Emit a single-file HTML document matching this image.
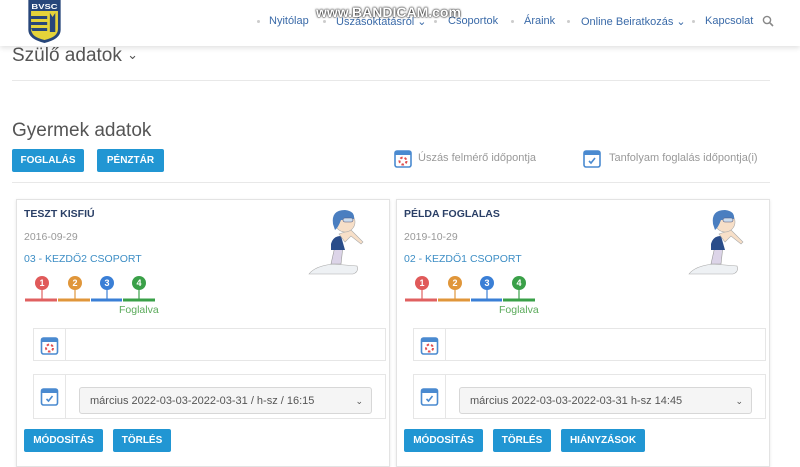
<!DOCTYPE html>
<html><head><meta charset="utf-8"><style>
*{box-sizing:border-box;margin:0;padding:0}
body{width:800px;height:467px;overflow:hidden;background:#fff;font-family:"Liberation Sans",sans-serif;position:relative}
.abs{position:absolute}
.hdr{left:0;top:0;width:800px;height:46px;background:#fff;box-shadow:0 2px 5px rgba(0,0,0,.12);z-index:2}
.nav{top:15px;font-size:11px;color:#3a6aa8;white-space:nowrap}
.dot{top:20px;width:3px;height:3px;background:#ccc;border-radius:50%}
.btn{background:#2196d3;color:#fff;font-weight:bold;font-size:10px;text-align:center;line-height:23px;border-radius:2px;height:23px}
.card{background:#fff;border:1px solid #e3e3e3;box-shadow:0 1px 3px rgba(0,0,0,.1);width:374px;height:268px;top:199px}
.name{left:7px;top:8px;font-size:10.5px;font-weight:bold;color:#2a3f66}
.date{left:7px;top:31px;font-size:10.5px;color:#999}
.grp{left:7px;top:53px;font-size:10.5px;color:#3d8ec5}
.row{border:1px solid #e6e6e6;left:16px;width:353px}
.sep{border-left:1px solid #e6e6e6;position:absolute;left:31px;top:0;bottom:0}
.sel{border:1px solid #d7d7d7;border-radius:3px;background:#f5f5f5;font-size:11px;color:#555;line-height:26px;padding-left:10px;height:27px}
</style></head><body>
<div class="abs hdr">
<svg class="abs" style="left:27px;top:0" width="35" height="43" viewBox="0 0 26 43" preserveAspectRatio="none"><path d="M1 0H25V30Q25 39 13 43Q1 39 1 30Z" fill="#27467a"/><path d="M3 11H23V29Q23 37 13 40Q3 37 3 29Z" fill="#e4d33a"/><path d="M3 16H15V19H3ZM3 22H15V25H3ZM3 28H15V31H4Z" fill="#27467a"/><path d="M17 13L19 17L21 13V32H17Z" fill="#27467a"/><text x="13" y="9" font-size="7" font-weight="bold" fill="#fff" text-anchor="middle" font-family="Liberation Sans">BVSC</text></svg>
<div class="abs dot" style="left:257px"></div><div class="abs nav" style="left:269px">Nyitólap</div>
<div class="abs dot" style="left:323px"></div><div class="abs nav" style="left:336px">Úszásoktatásról ⌄</div>
<div class="abs dot" style="left:434px"></div><div class="abs nav" style="left:448px">Csoportok</div>
<div class="abs dot" style="left:511px"></div><div class="abs nav" style="left:524px">Áraink</div>
<div class="abs dot" style="left:567px"></div><div class="abs nav" style="left:581px">Online Beiratkozás ⌄</div>
<div class="abs dot" style="left:692px"></div><div class="abs nav" style="left:705px">Kapcsolat</div>
<svg class="abs" style="left:762px;top:15px" width="12" height="12" viewBox="0 0 12 12"><circle cx="5" cy="5" r="3.6" fill="none" stroke="#888" stroke-width="1.4"/><path d="M7.6 7.6L11 11" stroke="#888" stroke-width="1.6"/></svg>
<div class="abs" style="left:316px;top:4px;font-size:14px;font-weight:bold;color:#fff;text-shadow:0 0 2px #000,0 0 1px #000;letter-spacing:0">www.BANDICAM.com</div>
</div>
<div class="abs" style="left:12px;top:45px;font-size:19px;color:#555">Szülő adatok <span style="font-size:13px;position:relative;top:-2px">⌄</span></div>
<div class="abs" style="left:12px;top:80px;width:758px;border-top:1px solid #e8e8e8"></div>
<div class="abs" style="left:12px;top:120px;font-size:19px;color:#555">Gyermek adatok</div>
<div class="abs btn" style="left:12px;top:149px;width:72px">FOGLALÁS</div>
<div class="abs btn" style="left:97px;top:149px;width:67px">PÉNZTÁR</div>
<svg class="abs" style="left:394px;top:148px" width="18" height="20" viewBox="0 0 18 20"><rect x="1" y="3" width="16" height="16" rx="2" fill="#fff" stroke="#4a8ad0" stroke-width="1.6"/><rect x="1" y="3" width="16" height="4" fill="#4a8ad0"/><circle cx="9" cy="13" r="3.5" fill="none" stroke="#e05050" stroke-width="2" stroke-dasharray="2.5 2"/></svg>
<div class="abs" style="left:418px;top:152px;font-size:11px;color:#999">Úszás felmérő időpontja</div>
<svg class="abs" style="left:583px;top:148px" width="18" height="20" viewBox="0 0 18 20"><rect x="1" y="3" width="16" height="16" rx="2" fill="#fff" stroke="#4a8ad0" stroke-width="1.6"/><rect x="1" y="3" width="16" height="4" fill="#4a8ad0"/><path d="M6 13L8 15L12 10" stroke="#4a8ad0" stroke-width="1.6" fill="none"/></svg>
<div class="abs" style="left:609px;top:152px;font-size:11px;color:#999">Tanfolyam foglalás időpontja(i)</div>
<div class="abs" style="left:12px;top:182px;width:758px;border-top:1px solid #e8e8e8"></div>

<div class="abs card" style="left:16px">
<div class="abs name">TESZT KISFIÚ</div><div class="abs date">2016-09-29</div><div class="abs grp">03 - KEZDŐ2 CSOPORT</div>
<svg class="abs" style="left:290px;top:6px" width="62" height="70" viewBox="0 0 62 70"><path d="M2 68Q8 60 26 58L50 60Q52 66 46 68Z" fill="#eef1f4" stroke="#aaa" stroke-width=".6"/><path d="M24 58L28 40L36 40L34 58Z" fill="#dcd4e8" stroke="#999" stroke-width=".6"/><path d="M24 38Q26 30 34 30L38 44L24 44Z" fill="#2a4d8a"/><path d="M32 28L44 24L56 36L54 38L44 30L38 36Z" fill="#f7dfc8" stroke="#aaa" stroke-width=".6"/><circle cx="38" cy="16" r="10" fill="#f7dfc8" stroke="#aaa" stroke-width=".6"/><path d="M26 18Q24 4 38 4Q48 5 47 13L34 14Q31 22 28 24Z" fill="#4a7ec0"/><rect x="36" y="12" width="10" height="4" rx="2" fill="#cde" stroke="#557" stroke-width=".6"/></svg>
<svg class="abs" style="left:8px;top:74px" width="130" height="28" viewBox="0 0 130 28"><g stroke-width="3"><path d="M0 26H32" stroke="#e06060"/><path d="M33 26H65" stroke="#e0963a"/><path d="M66 26H97" stroke="#3a7fd6"/><path d="M98 26H130" stroke="#3aa048"/></g><g stroke-width="1.2"><path d="M17 8V26" stroke="#e06060"/><path d="M50 8V26" stroke="#e0963a"/><path d="M82 8V26" stroke="#3a7fd6"/><path d="M114 8V26" stroke="#3aa048"/></g><circle cx="17" cy="9" r="7" fill="#e05a5a"/><circle cx="50" cy="9" r="7" fill="#e0963a"/><circle cx="82" cy="9" r="7" fill="#3a7fd6"/><circle cx="114" cy="9" r="7" fill="#3aa048"/><g font-size="9" font-weight="bold" fill="#fff" text-anchor="middle" font-family="Liberation Sans"><text x="17" y="12">1</text><text x="50" y="12">2</text><text x="82" y="12">3</text><text x="114" y="12">4</text></g></svg>
<div class="abs" style="left:102px;top:104px;font-size:10.5px;color:#5aaa5a">Foglalva</div>
<div class="abs row" style="top:128px;height:33px"><div class="sep"></div>
<svg class="abs" style="left:6px;top:6px" width="19" height="20" viewBox="0 0 18 20"><rect x="1" y="3" width="16" height="16" rx="2" fill="#fff" stroke="#4a8ad0" stroke-width="1.6"/><rect x="1" y="3" width="16" height="4" fill="#4a8ad0"/><circle cx="9" cy="13" r="3.5" fill="none" stroke="#e05050" stroke-width="2" stroke-dasharray="2.5 2"/></svg></div>
<div class="abs row" style="top:174px;height:45px"><div class="sep"></div>
<svg class="abs" style="left:6px;top:11px" width="19" height="20" viewBox="0 0 18 20"><rect x="1" y="3" width="16" height="16" rx="2" fill="#fff" stroke="#4a8ad0" stroke-width="1.6"/><rect x="1" y="3" width="16" height="4" fill="#4a8ad0"/><path d="M6 13L8 15L12 10" stroke="#4a8ad0" stroke-width="1.6" fill="none"/></svg>
<div class="abs sel" style="left:45px;top:12px;width:293px">március 2022-03-03-2022-03-31 / h-sz / 16:15<span style="position:absolute;right:8px;font-size:9px">⌄</span></div></div>
<div class="abs btn" style="left:7px;top:229px;width:79px">MÓDOSÍTÁS</div>
<div class="abs btn" style="left:96px;top:229px;width:58px">TÖRLÉS</div>
</div>

<div class="abs card" style="left:396px">
<div class="abs name">PÉLDA FOGLALAS</div><div class="abs date">2019-10-29</div><div class="abs grp">02 - KEZDŐ1 CSOPORT</div>
<svg class="abs" style="left:290px;top:6px" width="62" height="70" viewBox="0 0 62 70"><path d="M2 68Q8 60 26 58L50 60Q52 66 46 68Z" fill="#eef1f4" stroke="#aaa" stroke-width=".6"/><path d="M24 58L28 40L36 40L34 58Z" fill="#dcd4e8" stroke="#999" stroke-width=".6"/><path d="M24 38Q26 30 34 30L38 44L24 44Z" fill="#2a4d8a"/><path d="M32 28L44 24L56 36L54 38L44 30L38 36Z" fill="#f7dfc8" stroke="#aaa" stroke-width=".6"/><circle cx="38" cy="16" r="10" fill="#f7dfc8" stroke="#aaa" stroke-width=".6"/><path d="M26 18Q24 4 38 4Q48 5 47 13L34 14Q31 22 28 24Z" fill="#4a7ec0"/><rect x="36" y="12" width="10" height="4" rx="2" fill="#cde" stroke="#557" stroke-width=".6"/></svg>
<svg class="abs" style="left:8px;top:74px" width="130" height="28" viewBox="0 0 130 28"><g stroke-width="3"><path d="M0 26H32" stroke="#e06060"/><path d="M33 26H65" stroke="#e0963a"/><path d="M66 26H97" stroke="#3a7fd6"/><path d="M98 26H130" stroke="#3aa048"/></g><g stroke-width="1.2"><path d="M17 8V26" stroke="#e06060"/><path d="M50 8V26" stroke="#e0963a"/><path d="M82 8V26" stroke="#3a7fd6"/><path d="M114 8V26" stroke="#3aa048"/></g><circle cx="17" cy="9" r="7" fill="#e05a5a"/><circle cx="50" cy="9" r="7" fill="#e0963a"/><circle cx="82" cy="9" r="7" fill="#3a7fd6"/><circle cx="114" cy="9" r="7" fill="#3aa048"/><g font-size="9" font-weight="bold" fill="#fff" text-anchor="middle" font-family="Liberation Sans"><text x="17" y="12">1</text><text x="50" y="12">2</text><text x="82" y="12">3</text><text x="114" y="12">4</text></g></svg>
<div class="abs" style="left:102px;top:104px;font-size:10.5px;color:#5aaa5a">Foglalva</div>
<div class="abs row" style="top:128px;height:33px"><div class="sep"></div>
<svg class="abs" style="left:6px;top:6px" width="19" height="20" viewBox="0 0 18 20"><rect x="1" y="3" width="16" height="16" rx="2" fill="#fff" stroke="#4a8ad0" stroke-width="1.6"/><rect x="1" y="3" width="16" height="4" fill="#4a8ad0"/><circle cx="9" cy="13" r="3.5" fill="none" stroke="#e05050" stroke-width="2" stroke-dasharray="2.5 2"/></svg></div>
<div class="abs row" style="top:174px;height:45px"><div class="sep"></div>
<svg class="abs" style="left:6px;top:11px" width="19" height="20" viewBox="0 0 18 20"><rect x="1" y="3" width="16" height="16" rx="2" fill="#fff" stroke="#4a8ad0" stroke-width="1.6"/><rect x="1" y="3" width="16" height="4" fill="#4a8ad0"/><path d="M6 13L8 15L12 10" stroke="#4a8ad0" stroke-width="1.6" fill="none"/></svg>
<div class="abs sel" style="left:45px;top:12px;width:293px">március 2022-03-03-2022-03-31 h-sz 14:45<span style="position:absolute;right:8px;font-size:9px">⌄</span></div></div>
<div class="abs btn" style="left:7px;top:229px;width:79px">MÓDOSÍTÁS</div>
<div class="abs btn" style="left:96px;top:229px;width:58px">TÖRLÉS</div>
<div class="abs btn" style="left:164px;top:229px;width:84px">HIÁNYZÁSOK</div>
</div>
</body></html>
